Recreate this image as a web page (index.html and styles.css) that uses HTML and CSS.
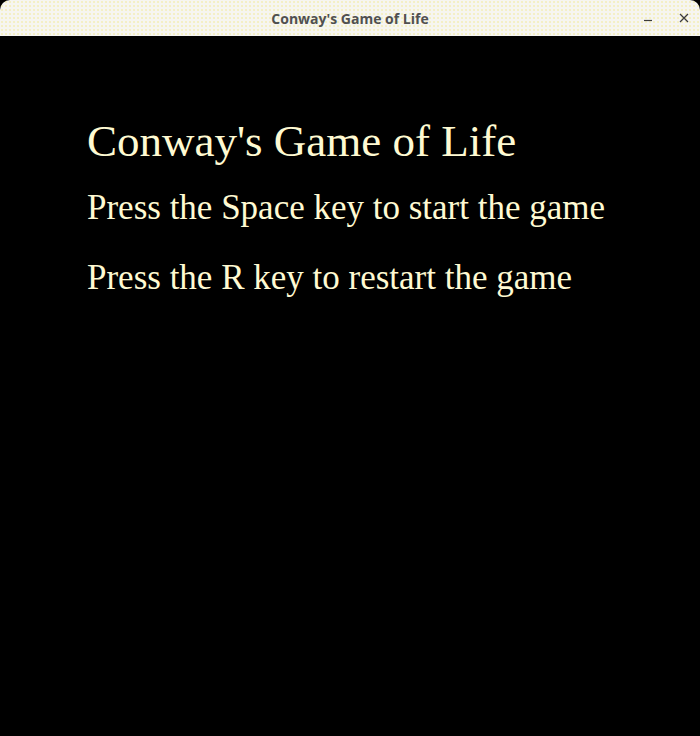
FILE: index.html
```html
<!DOCTYPE html>
<html lang="en">
<head>
<meta charset="utf-8">
<title>Conway's Game of Life</title>
<link rel="stylesheet" href="styles.css">
</head>
<body>
<div class="window">
  <header class="titlebar">
    <div class="title">Conway's Game of Life</div>
    <div class="controls">
      <svg class="ctl" width="16" height="16" viewBox="0 0 16 16"><line x1="4" y1="10.5" x2="12" y2="10.5" stroke="#3c3c3c" stroke-width="1.2"/></svg>
      <svg class="ctl" width="16" height="16" viewBox="0 0 16 16"><path d="M4 4 L12 12 M12 4 L4 12" stroke="#3c3c3c" stroke-width="1.3" fill="none"/></svg>
    </div>
  </header>
  <main class="canvas">
    <h1 class="heading">Conway's Game of Life</h1>
    <p class="line line-first">Press the Space key to start the game</p>
    <p class="line line-second">Press the R key to restart the game</p>
  </main>
</div>
</body>
</html>
```
FILE: styles.css
```css
html, body {
  margin: 0;
  padding: 0;
  background: #000;
  width: 700px;
  height: 736px;
  overflow: hidden;
}

.window {
  display: flex;
  flex-direction: column;
  height: 736px;
}

.titlebar {
  position: relative;
  height: 36px;
  flex: 0 0 36px;
  background-color: #f6f5f0;
  background-image: radial-gradient(circle, rgba(240,230,120,0.35) 0.8px, transparent 1.2px);
  background-size: 4px 4px;
  border-radius: 10px 10px 0 0;
  display: flex;
  align-items: center;
  justify-content: center;
}

.title {
  font-family: "Open Sans", "DejaVu Sans", sans-serif;
  font-weight: 700;
  font-size: 14px;
  color: #505050;
  padding-top: 1px;
}

.controls {
  position: absolute;
  right: 8px;
  top: 10px;
  display: flex;
  gap: 20px;
}

.ctl {
  display: block;
}

.canvas {
  flex: 1;
  background: #000;
  padding: 80px 0 0 87px;
  font-family: "Liberation Serif", "Times New Roman", serif;
  color: #fffad2;
}

.heading {
  margin: 0;
  font-weight: 400;
  font-size: 45px;
  line-height: 50px;
}

.line {
  margin: 0;
  font-size: 35px;
  line-height: 40px;
}

.line-first {
  margin-top: 22px;
}

.line-second {
  margin-top: 30px;
}
```
